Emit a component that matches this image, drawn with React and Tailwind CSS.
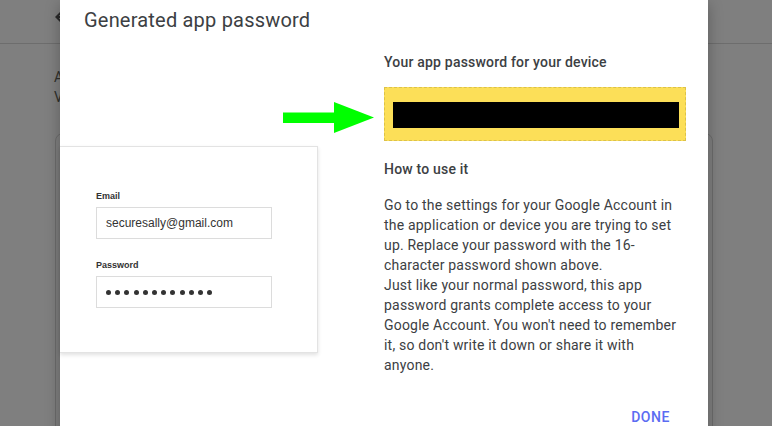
import React from "react"

const Dots = ({ count }) => (
  <div className="flex items-center gap-[4.2px]">
    {Array.from({ length: count }).map((_, i) => (
      <span key={i} className="block w-[5px] h-[5px] rounded-full bg-[#333]" />
    ))}
  </div>
)

const LoginIllustration = () => (
  <div className="w-[258px] h-[207px] bg-white border border-l-0 border-[#e3e3e3] shadow-[0_2px_4px_rgba(0,0,0,0.12)] pl-[36px] pt-[43px] font-['Liberation_Sans',Arial,sans-serif] text-[#333]">
    <div className="text-[9px] leading-[12px] font-bold">Email</div>
    <div className="mt-[5px] w-[176px] h-[32px] border border-[#dcdcdc] flex items-center pl-[9px] text-[12px]">
      securesally@gmail.com
    </div>
    <div className="mt-[20px] text-[9px] leading-[12px] font-bold">Password</div>
    <div className="mt-[5px] w-[176px] h-[32px] border border-[#dcdcdc] flex items-center pl-[9px]">
      <Dots count={12} />
    </div>
  </div>
)

export default function App() {
  return (
    <div className="relative w-[772px] h-[426px] overflow-hidden bg-[#7f7f7f] font-['Roboto',sans-serif]">
      {/* page behind the modal */}
      <div className="h-[44px] border-b border-[#6d6d6d] pl-[51px] pt-[5px]">
        <svg width="24" height="24" viewBox="0 0 24 24" fill="#2a2a2a">
          <path d="M20 11H7.83l5.59-5.59L12 4l-8 8 8 8 1.41-1.41L7.83 13H20v-2z" />
        </svg>
      </div>
      <div className="pl-[54px] pt-[23px] text-[14px] leading-5 text-[#30302c]">
        <p>App passwords let you sign in to your Google Account from apps on devices</p>
        <p>Verification. You'll only need to enter it once.</p>
      </div>
      <div className="ml-[55px] mr-[59px] mt-[26px] h-[400px] rounded-[8px] border border-[#6c6c6c]" />

      {/* dialog */}
      <div className="absolute left-[60px] top-0 w-[648px] h-[470px] bg-white shadow-[0_4px_14px_rgba(0,0,0,0.28)]">
        <h2 className="pl-[24px] pt-[6px] text-[20px] leading-[28px] tracking-[0.2px] text-[#3c4043]">Generated app password</h2>

        <div className="flex">
          <div className="w-[324px] pt-[112px]">
            <LoginIllustration />
          </div>

          <div className="w-[302px] pt-[18px] flex flex-col text-[14px] leading-5 tracking-[0.2px] text-[#3c4043]">
            <p className="font-medium">Your app password for your device</p>
            <div className="mt-[15px] h-[54px] bg-[#fcdf58] border border-dashed border-[#dcc24a] pt-[14px] pl-[8px] pr-[6px]">
              <div className="h-[26px] bg-black" />
            </div>
            <p className="mt-[18px] font-medium">How to use it</p>
            <div className="mt-[16px]">
              <p>
                Go to the settings for your Google Account in the application or device you are trying to set up.
                Replace your password with the 16-character password shown above.
              </p>
              <p>
                Just like your normal password, this app password grants complete access to your Google Account.
                You won't need to remember it, so don't write it down or share it with anyone.
              </p>
            </div>
            <button className="self-end mt-[32px] mr-[16px] text-[14px] leading-5 font-medium tracking-[0.04em] text-[#5b6cf2]">
              DONE
            </button>
          </div>
        </div>

        {/* green pointer arrow */}
        <svg className="absolute left-[223px] top-[102px]" width="92" height="32" viewBox="0 0 92 32">
          <rect x="0" y="10.5" width="52" height="10.5" fill="#00ff00" />
          <polygon points="51,0 91,15.5 51,31" fill="#00ff00" />
        </svg>
      </div>
    </div>
  )
}
